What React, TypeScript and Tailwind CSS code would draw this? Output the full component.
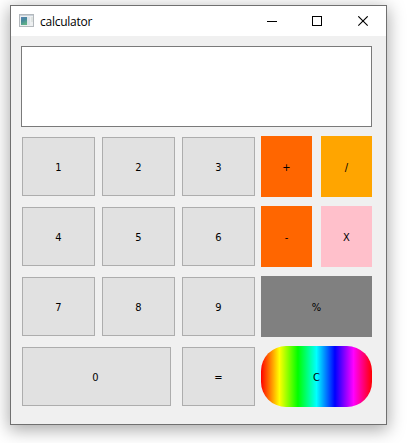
import type { ReactNode } from 'react';

function Key({ label, className = 'w-[73px]' }: { label: string; className?: string }) {
  return (
    <button
      className={`m-px flex h-[59px] shrink-0 items-center justify-center border border-[#adadad] bg-[#e1e1e1] pt-[2px] ${className}`}
    >
      {label}
    </button>
  );
}

function ColorKey({ label, className }: { label: string; className: string }) {
  return (
    <button className={`flex h-[61px] shrink-0 items-center justify-center pt-[2px] ${className}`}>
      {label}
    </button>
  );
}

function Row({ children }: { children: ReactNode }) {
  return <div className="flex gap-[5px]">{children}</div>;
}

function AppIcon() {
  return (
    <svg className="-mt-px" width="15" height="13" viewBox="0 0 15 13" shapeRendering="crispEdges">
      <defs>
        <linearGradient id="pane" x1="0" y1="0" x2="0.4" y2="1">
          <stop offset="0" stopColor="#5a82b4" />
          <stop offset="0.5" stopColor="#46899a" />
          <stop offset="1" stopColor="#5fb088" />
        </linearGradient>
      </defs>
      <rect x="0" y="0" width="15" height="13" fill="#b4b9bd" />
      <rect x="1" y="1" width="13" height="11" fill="#eef0f1" />
      <rect x="1" y="1" width="13" height="1" fill="#c9d2da" />
      <rect x="2" y="3" width="6" height="8" fill="url(#pane)" />
      <rect x="8" y="3" width="3" height="8" fill="#dde4ea" />
      <rect x="12" y="3" width="2" height="5" fill="#dfe4e2" />
    </svg>
  );
}

export default function App() {
  return (
    <div className="h-[443px] w-[414px] overflow-hidden bg-white pt-[5px] pl-[10px]">
      <div className="flex h-[420px] w-[377px] flex-col border border-[#707070] bg-[#f0f0f0] shadow-[0_4px_16px_1px_rgba(0,0,0,0.34)]">
        <header className="flex h-[30px] shrink-0 items-center bg-white pl-2">
          <AppIcon />
          <span className="ml-[6px] pt-px font-['Open_Sans',sans-serif] text-[12px] leading-4 tracking-[-0.25px] text-black">
            calculator
          </span>
          <div className="ml-auto flex pr-[17px]">
            <svg width="102" height="11" viewBox="0 0 102 11" fill="none" stroke="#000">
              <path d="M0 5.5h10" shapeRendering="crispEdges" />
              <rect x="45.5" y="0.5" width="9" height="9" shapeRendering="crispEdges" />
              <path d="M91.3 0.3l9.4 9.4M100.7 0.3l-9.4 9.4" strokeWidth="1.1" />
            </svg>
          </div>
        </header>
        <main className="flex flex-col gap-[9px] p-[10px] font-['DejaVu_Sans_Condensed','DejaVu_Sans',sans-serif] text-[11px] leading-[13px] text-black">
          <div className="h-[81px] w-[351px] border border-[#7a7a7a] bg-white" />
          <Row>
            <Key label="1" />
            <Key label="2" />
            <Key label="3" />
            <div className="flex gap-[9px]">
              <ColorKey label="+" className="w-[51px] bg-[#ff6600]" />
              <ColorKey label="/" className="w-[51px] bg-[#ffa500]" />
            </div>
          </Row>
          <Row>
            <Key label="4" />
            <Key label="5" />
            <Key label="6" />
            <div className="flex gap-[9px]">
              <ColorKey label="-" className="w-[51px] bg-[#ff6600]" />
              <ColorKey label="X" className="w-[51px] bg-[#ffc0cb]" />
            </div>
          </Row>
          <Row>
            <Key label="7" />
            <Key label="8" />
            <Key label="9" />
            <ColorKey label="%" className="w-[111px] bg-[#808080]" />
          </Row>
          <Row>
            <Key label="0" className="mr-[5px] w-[149px] pr-[2px]" />
            <Key label="=" />
            <ColorKey
              label="C"
              className="w-[111px] rounded-[25px] bg-[linear-gradient(90deg,#ff0000_0%,#ffff00_16.6%,#00ff00_33.3%,#00ffff_50%,#0000ff_66.6%,#ff00ff_83.3%,#ff0000_100%)]"
            />
          </Row>
        </main>
      </div>
    </div>
  );
}
